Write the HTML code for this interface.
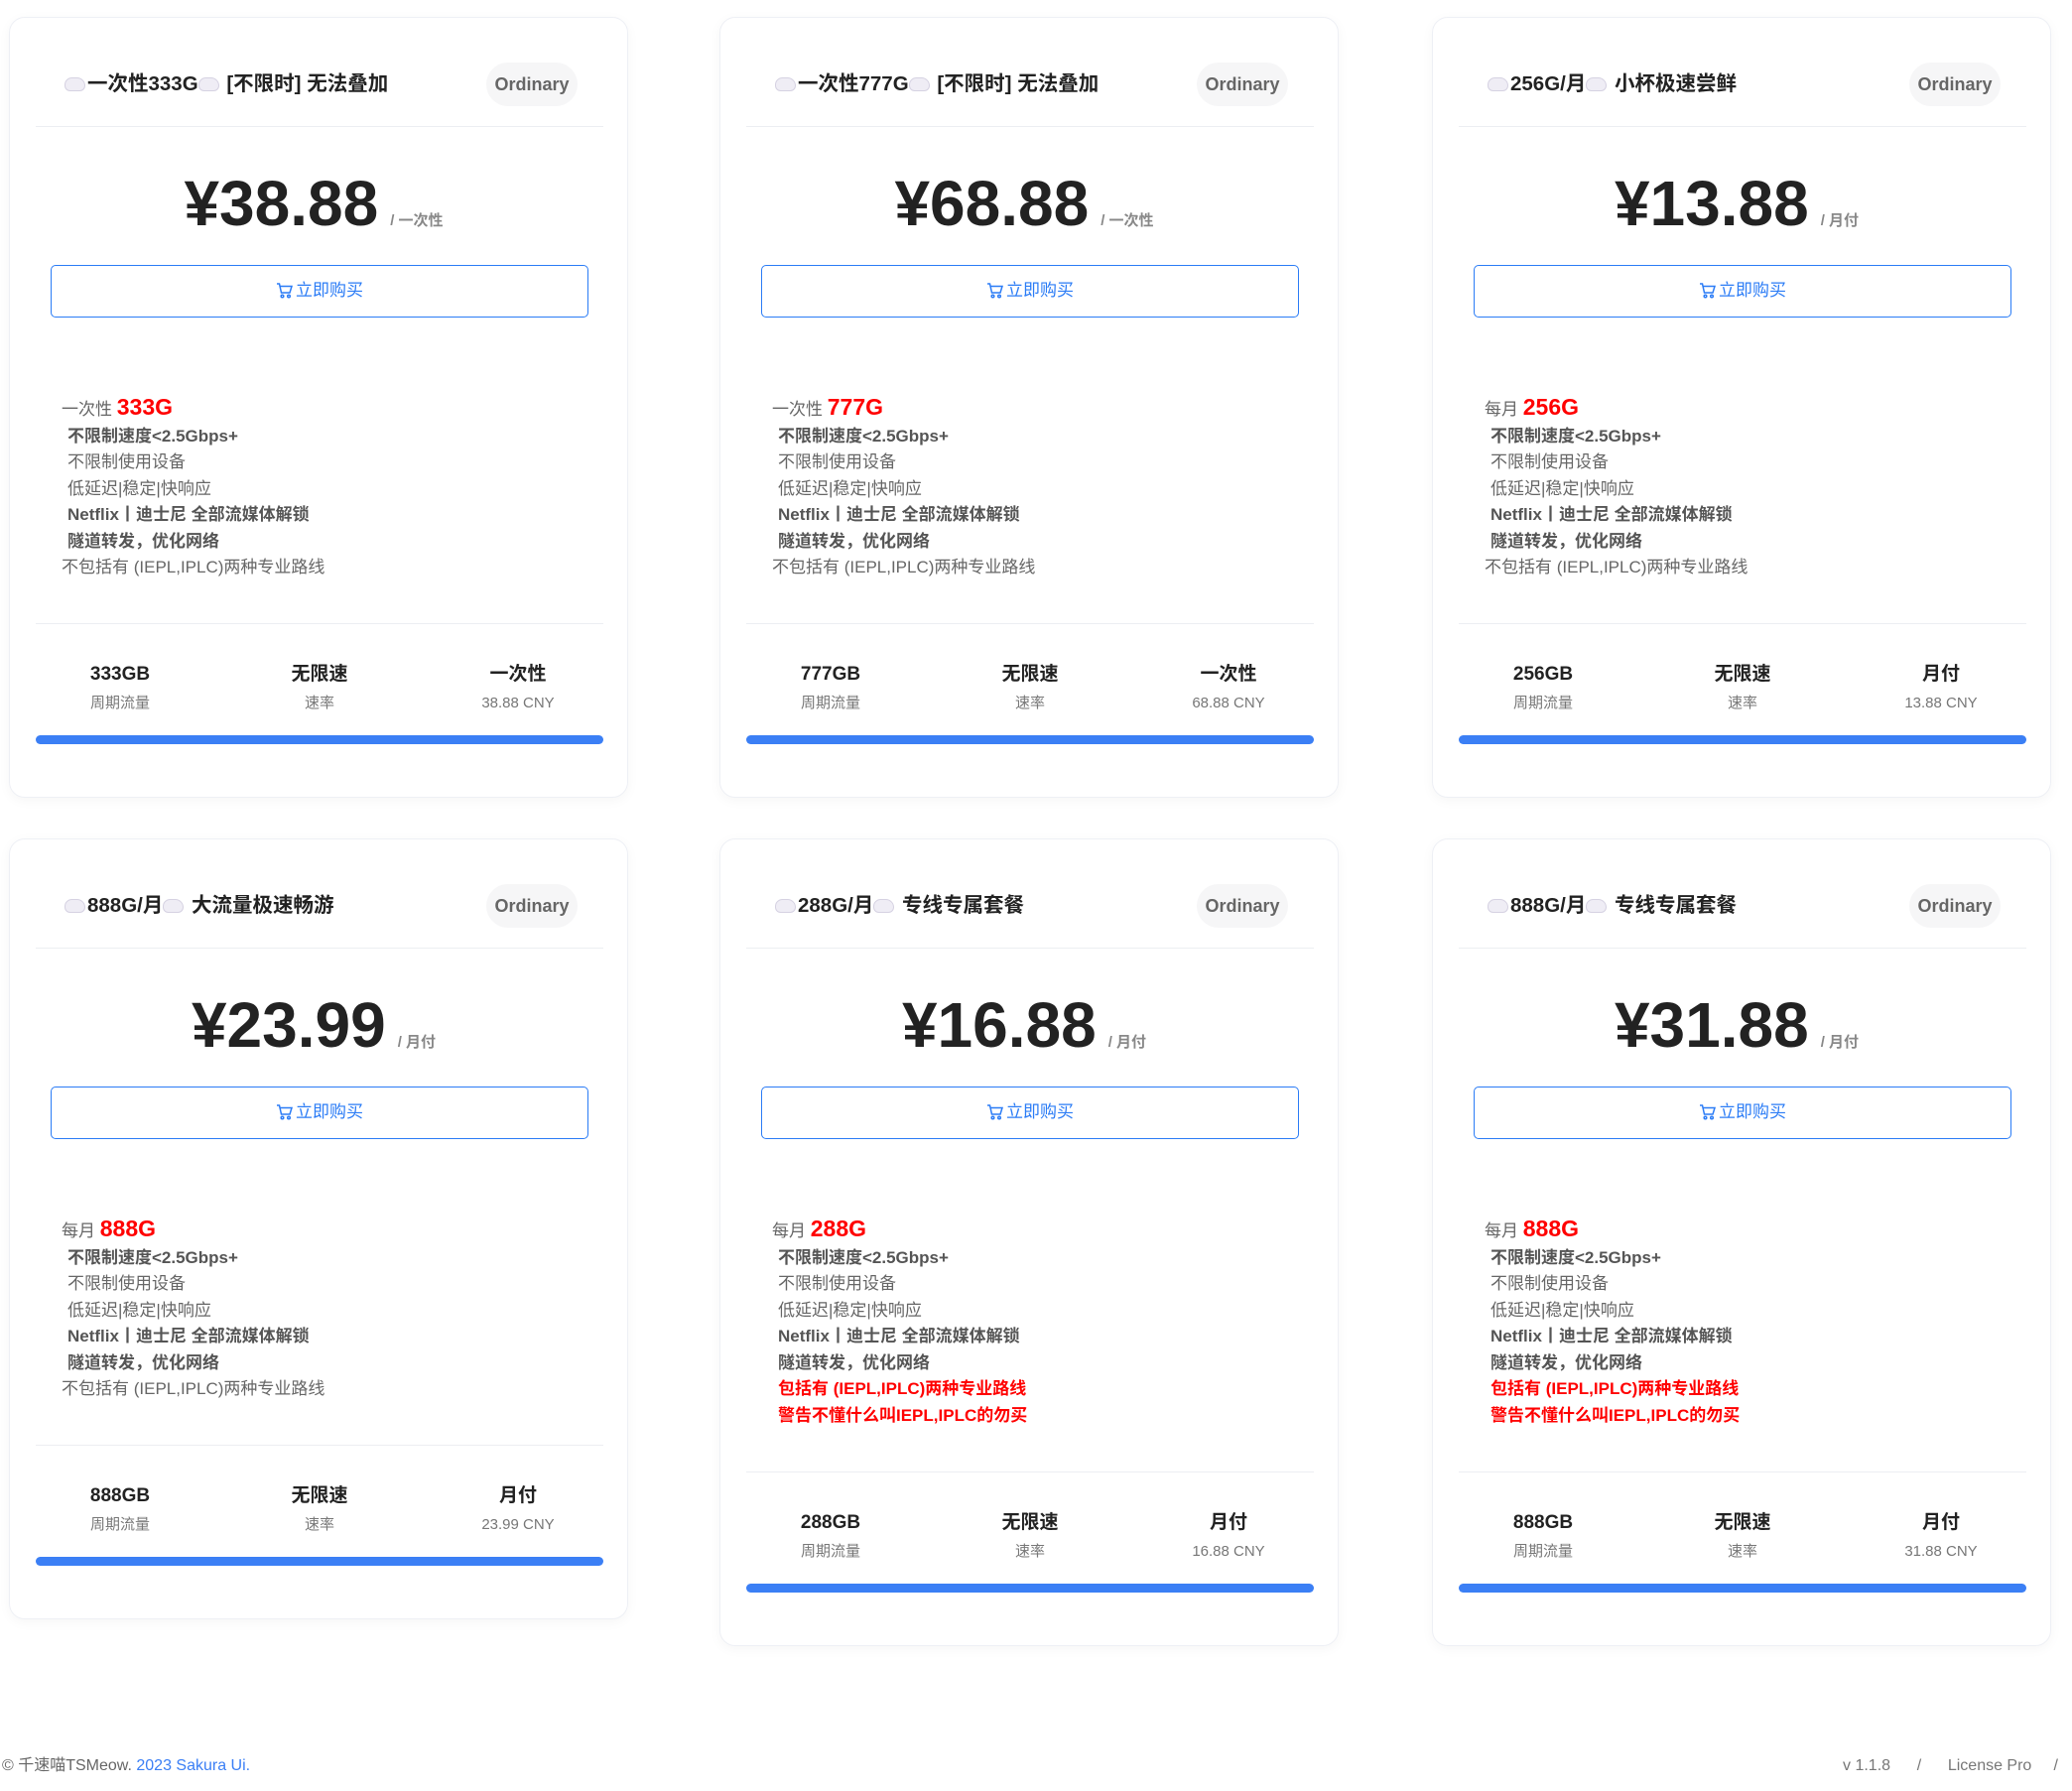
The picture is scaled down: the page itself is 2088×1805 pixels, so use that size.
<!DOCTYPE html>
<html><head><meta charset="utf-8"><style>
*{margin:0;padding:0;box-sizing:border-box}
body{width:2088px;height:1805px;background:#fff;position:relative;font-family:"Liberation Sans","Noto Sans CJK SC",sans-serif;overflow:hidden}
.card{position:absolute;width:624px;height:787px;border:1px solid #eef0f5;border-radius:16px;background:#fff;box-shadow:0 3px 12px rgba(0,0,0,0.04)}
.card.tall{height:814px}
.title{position:absolute;left:55px;top:54px;font-size:20.5px;font-weight:bold;color:#222;line-height:26px;white-space:nowrap}
.cl{display:inline-block;width:21px;height:14px;background:#efedf5;border:1px solid #d6d2e2;border-radius:8px 9px 6px 6px;vertical-align:-1px;margin-right:2px}
.pill{position:absolute;left:480px;top:45px;width:92px;height:44px;border-radius:22px;background:#f6f6f7;color:#666;font-weight:bold;font-size:18px;line-height:44px;text-align:center}
.hr{position:absolute;left:26px;width:572px;height:1px;background:#eceef2}
.price{position:absolute;left:-6px;width:624px;top:150px;text-align:center;white-space:nowrap}
.price b{font-size:64px;color:#222;line-height:74px}
.price span{font-size:15px;color:#888;font-weight:bold;margin-left:12px}
.btn{position:absolute;left:41px;top:249px;width:542px;height:53px;border:1.5px solid #2b7cf6;border-radius:5px;color:#2b7cf6;font-size:17px;text-align:center;line-height:50px}
.btn svg{vertical-align:-3px;margin-right:3px}
.feat{position:absolute;left:52px;top:379px;font-size:17px;color:#666;line-height:26.5px;white-space:nowrap}
.feat div{padding-left:6px}
.feat .f{padding-left:0}
.feat .f em{font-style:normal;color:#f00;font-weight:bold;font-size:23px}
.feat .bd{font-weight:bold;color:#555}
.feat .rd{font-weight:bold;color:#f00}
.stats{position:absolute;left:0;width:624px}
.st{position:absolute;width:200px;text-align:center;margin-left:-100px}
.st b{display:block;font-size:19px;color:#222;line-height:26px}
.st i{display:block;font-style:normal;font-size:15px;color:#777;line-height:26px;margin-top:3px}
.bar{position:absolute;left:26px;width:572px;height:9px;border-radius:5px;background:#3b7ff5}
.foot{position:absolute;top:1769px;font-size:16px;color:#666;line-height:22px;white-space:pre}
</style></head><body>

<div class="card" style="left:9px;top:17px">
<div class="title"><span class="cl"></span>一次性333G<span class="cl"></span> [不限时] 无法叠加</div><div class="pill">Ordinary</div>
<div class="hr" style="top:109px"></div>
<div class="price"><b>¥38.88</b><span>/ 一次性</span></div>
<div class="btn"><svg width="17" height="17" viewBox="0 0 17 17" fill="none" stroke="#2b7cf6" stroke-width="1.5"><path d="M1 2h2.5l2 9h8.5l2-6.5H4.2"/><circle cx="6.5" cy="14.5" r="1.3"/><circle cx="13" cy="14.5" r="1.3"/></svg>立即购买</div>
<div class="feat"><div class="f">一次性 <em>333G</em></div><div class="bd">不限制速度&lt;2.5Gbps+</div><div>不限制使用设备</div><div>低延迟|稳定|快响应</div><div class="bd">Netflix丨迪士尼 全部流媒体解锁</div><div class="bd">隧道转发，优化网络</div><div class="f">不包括有 (IEPL,IPLC)两种专业路线</div></div>
<div class="hr" style="top:610px"></div>
<div class="stats" style="top:649px"><div class="st" style="left:111px"><b>333GB</b><i>周期流量</i></div><div class="st" style="left:312px"><b>无限速</b><i>速率</i></div><div class="st" style="left:512px"><b>一次性</b><i>38.88 CNY</i></div></div>
<div class="bar" style="top:723px"></div>
</div>

<div class="card" style="left:725px;top:17px">
<div class="title"><span class="cl"></span>一次性777G<span class="cl"></span> [不限时] 无法叠加</div><div class="pill">Ordinary</div>
<div class="hr" style="top:109px"></div>
<div class="price"><b>¥68.88</b><span>/ 一次性</span></div>
<div class="btn"><svg width="17" height="17" viewBox="0 0 17 17" fill="none" stroke="#2b7cf6" stroke-width="1.5"><path d="M1 2h2.5l2 9h8.5l2-6.5H4.2"/><circle cx="6.5" cy="14.5" r="1.3"/><circle cx="13" cy="14.5" r="1.3"/></svg>立即购买</div>
<div class="feat"><div class="f">一次性 <em>777G</em></div><div class="bd">不限制速度&lt;2.5Gbps+</div><div>不限制使用设备</div><div>低延迟|稳定|快响应</div><div class="bd">Netflix丨迪士尼 全部流媒体解锁</div><div class="bd">隧道转发，优化网络</div><div class="f">不包括有 (IEPL,IPLC)两种专业路线</div></div>
<div class="hr" style="top:610px"></div>
<div class="stats" style="top:649px"><div class="st" style="left:111px"><b>777GB</b><i>周期流量</i></div><div class="st" style="left:312px"><b>无限速</b><i>速率</i></div><div class="st" style="left:512px"><b>一次性</b><i>68.88 CNY</i></div></div>
<div class="bar" style="top:723px"></div>
</div>

<div class="card" style="left:1443px;top:17px">
<div class="title"><span class="cl"></span>256G/月<span class="cl"></span> 小杯极速尝鲜</div><div class="pill">Ordinary</div>
<div class="hr" style="top:109px"></div>
<div class="price"><b>¥13.88</b><span>/ 月付</span></div>
<div class="btn"><svg width="17" height="17" viewBox="0 0 17 17" fill="none" stroke="#2b7cf6" stroke-width="1.5"><path d="M1 2h2.5l2 9h8.5l2-6.5H4.2"/><circle cx="6.5" cy="14.5" r="1.3"/><circle cx="13" cy="14.5" r="1.3"/></svg>立即购买</div>
<div class="feat"><div class="f">每月 <em>256G</em></div><div class="bd">不限制速度&lt;2.5Gbps+</div><div>不限制使用设备</div><div>低延迟|稳定|快响应</div><div class="bd">Netflix丨迪士尼 全部流媒体解锁</div><div class="bd">隧道转发，优化网络</div><div class="f">不包括有 (IEPL,IPLC)两种专业路线</div></div>
<div class="hr" style="top:610px"></div>
<div class="stats" style="top:649px"><div class="st" style="left:111px"><b>256GB</b><i>周期流量</i></div><div class="st" style="left:312px"><b>无限速</b><i>速率</i></div><div class="st" style="left:512px"><b>月付</b><i>13.88 CNY</i></div></div>
<div class="bar" style="top:723px"></div>
</div>

<div class="card" style="left:9px;top:845px">
<div class="title"><span class="cl"></span>888G/月<span class="cl"></span> 大流量极速畅游</div><div class="pill">Ordinary</div>
<div class="hr" style="top:109px"></div>
<div class="price"><b>¥23.99</b><span>/ 月付</span></div>
<div class="btn"><svg width="17" height="17" viewBox="0 0 17 17" fill="none" stroke="#2b7cf6" stroke-width="1.5"><path d="M1 2h2.5l2 9h8.5l2-6.5H4.2"/><circle cx="6.5" cy="14.5" r="1.3"/><circle cx="13" cy="14.5" r="1.3"/></svg>立即购买</div>
<div class="feat"><div class="f">每月 <em>888G</em></div><div class="bd">不限制速度&lt;2.5Gbps+</div><div>不限制使用设备</div><div>低延迟|稳定|快响应</div><div class="bd">Netflix丨迪士尼 全部流媒体解锁</div><div class="bd">隧道转发，优化网络</div><div class="f">不包括有 (IEPL,IPLC)两种专业路线</div></div>
<div class="hr" style="top:610px"></div>
<div class="stats" style="top:649px"><div class="st" style="left:111px"><b>888GB</b><i>周期流量</i></div><div class="st" style="left:312px"><b>无限速</b><i>速率</i></div><div class="st" style="left:512px"><b>月付</b><i>23.99 CNY</i></div></div>
<div class="bar" style="top:723px"></div>
</div>

<div class="card tall" style="left:725px;top:845px">
<div class="title"><span class="cl"></span>288G/月<span class="cl"></span> 专线专属套餐</div><div class="pill">Ordinary</div>
<div class="hr" style="top:109px"></div>
<div class="price"><b>¥16.88</b><span>/ 月付</span></div>
<div class="btn"><svg width="17" height="17" viewBox="0 0 17 17" fill="none" stroke="#2b7cf6" stroke-width="1.5"><path d="M1 2h2.5l2 9h8.5l2-6.5H4.2"/><circle cx="6.5" cy="14.5" r="1.3"/><circle cx="13" cy="14.5" r="1.3"/></svg>立即购买</div>
<div class="feat"><div class="f">每月 <em>288G</em></div><div class="bd">不限制速度&lt;2.5Gbps+</div><div>不限制使用设备</div><div>低延迟|稳定|快响应</div><div class="bd">Netflix丨迪士尼 全部流媒体解锁</div><div class="bd">隧道转发，优化网络</div><div class="rd">包括有 (IEPL,IPLC)两种专业路线</div><div class="rd">警告不懂什么叫IEPL,IPLC的勿买</div></div>
<div class="hr" style="top:637px"></div>
<div class="stats" style="top:676px"><div class="st" style="left:111px"><b>288GB</b><i>周期流量</i></div><div class="st" style="left:312px"><b>无限速</b><i>速率</i></div><div class="st" style="left:512px"><b>月付</b><i>16.88 CNY</i></div></div>
<div class="bar" style="top:750px"></div>
</div>

<div class="card tall" style="left:1443px;top:845px">
<div class="title"><span class="cl"></span>888G/月<span class="cl"></span> 专线专属套餐</div><div class="pill">Ordinary</div>
<div class="hr" style="top:109px"></div>
<div class="price"><b>¥31.88</b><span>/ 月付</span></div>
<div class="btn"><svg width="17" height="17" viewBox="0 0 17 17" fill="none" stroke="#2b7cf6" stroke-width="1.5"><path d="M1 2h2.5l2 9h8.5l2-6.5H4.2"/><circle cx="6.5" cy="14.5" r="1.3"/><circle cx="13" cy="14.5" r="1.3"/></svg>立即购买</div>
<div class="feat"><div class="f">每月 <em>888G</em></div><div class="bd">不限制速度&lt;2.5Gbps+</div><div>不限制使用设备</div><div>低延迟|稳定|快响应</div><div class="bd">Netflix丨迪士尼 全部流媒体解锁</div><div class="bd">隧道转发，优化网络</div><div class="rd">包括有 (IEPL,IPLC)两种专业路线</div><div class="rd">警告不懂什么叫IEPL,IPLC的勿买</div></div>
<div class="hr" style="top:637px"></div>
<div class="stats" style="top:676px"><div class="st" style="left:111px"><b>888GB</b><i>周期流量</i></div><div class="st" style="left:312px"><b>无限速</b><i>速率</i></div><div class="st" style="left:512px"><b>月付</b><i>31.88 CNY</i></div></div>
<div class="bar" style="top:750px"></div>
</div>

<div class="foot" style="left:2px">© 千速喵TSMeow. <span style="color:#3b7ff5">2023 Sakura Ui.</span></div>
<div class="foot" style="right:14px;color:#777">v 1.1.8      /      License Pro     /</div>
</body></html>
